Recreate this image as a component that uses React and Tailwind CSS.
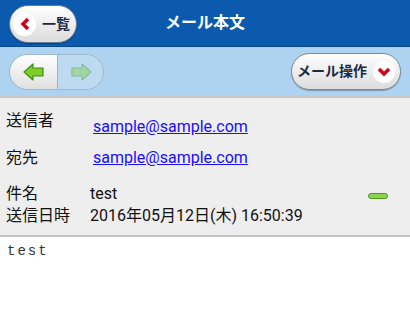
import React from "react";

const font = { fontFamily: 'Roboto, "Noto Sans CJK JP", sans-serif' };

const App = () => {
  return (
    <div className="w-[410px] h-[320px] bg-white overflow-hidden" style={font}>
      {/* header */}
      <div className="h-[47px] bg-[#0b5aae] border-b border-[#08488c] relative flex items-center justify-center">
        <button className="absolute left-[9px] top-[5px] h-[38px] w-[68px] rounded-full border border-[#6a7f96] bg-gradient-to-b from-white to-[#dcdcdc] flex items-center pl-[3px] gap-[6px] shadow-[0_1px_1px_rgba(0,0,0,0.3)]">
          <span className="w-[23px] h-[23px] rounded-full bg-white flex items-center justify-center">
            <svg width="12" height="14" viewBox="0 0 12 14">
              <path d="M9 2 L4 7 L9 12" stroke="#d0021b" strokeWidth="3.5" fill="none" strokeLinejoin="miter" />
            </svg>
          </span>
          <span className="text-[14px] font-bold text-[#1a2a44]">一覧</span>
        </button>
        <h1 className="text-white text-[16px] font-bold">メール本文</h1>
      </div>

      {/* toolbar */}
      <div className="h-[51px] bg-[#aed3f1] border-b-2 border-[#c8c8c8] flex items-center justify-between px-[9px]">
        <div className="flex h-[36px] w-[95px] rounded-full border border-[#9fb7cc] overflow-hidden">
          <div className="w-[48px] h-full bg-gradient-to-b from-white to-[#e0e0e0] border-r border-[#b0b0b0] flex items-center justify-center rounded-l-full">
            <svg width="22" height="18" viewBox="0 0 22 18">
              <path d="M1 9 L10 1 L10 5 L20 5 L20 13 L10 13 L10 17 Z" fill="#7ccd2c" stroke="#3f8e12" strokeWidth="1.2" strokeLinejoin="round" />
            </svg>
          </div>
          <div className="flex-1 h-full bg-[#bcdaf2] flex items-center justify-center">
            <svg width="22" height="18" viewBox="0 0 22 18" className="opacity-40">
              <path d="M21 9 L12 1 L12 5 L2 5 L2 13 L12 13 L12 17 Z" fill="#7ccd2c" stroke="#3f8e12" strokeWidth="1.2" strokeLinejoin="round" />
            </svg>
          </div>
        </div>
        <button className="h-[37px] w-[110px] rounded-full border border-[#7a8a9a] bg-gradient-to-b from-white to-[#dcdcdc] flex items-center justify-end pr-[5px] gap-[6px] shadow-[0_1px_1px_rgba(0,0,0,0.3)]">
          <span className="text-[14px] font-bold text-[#1a2a44]">メール操作</span>
          <span className="w-[22px] h-[22px] rounded-full bg-white flex items-center justify-center">
            <svg width="14" height="12" viewBox="0 0 14 12">
              <path d="M2 3 L7 8 L12 3" stroke="#d0021b" strokeWidth="3.5" fill="none" />
            </svg>
          </span>
        </button>
      </div>

      {/* headers */}
      <div className="h-[139px] bg-[#eeeeee] border-b-2 border-[#c4c4c4] pl-[6px] pr-[22px] text-[16px] text-[#111]">
        <div className="flex pt-[11px]">
          <span className="w-[87px]">送信者</span>
          <a className="mt-[6px] text-[#1a0dff] underline">sample@sample.com</a>
        </div>
        <div className="flex mt-[7px]">
          <span className="w-[87px]">宛先</span>
          <a className="text-[#1a0dff] underline">sample@sample.com</a>
        </div>
        <div className="flex items-center mt-[13px]">
          <div className="flex flex-col flex-1 leading-[22px]">
            <div className="flex">
              <span className="w-[84px]">件名</span>
              <span>test</span>
            </div>
            <div className="flex">
              <span className="w-[84px]">送信日時</span>
              <span>2016年05月12日(木) 16:50:39</span>
            </div>
          </div>
          <span className="w-[20px] h-[6px] rounded-full bg-[#8fd14f] border border-[#4a9a1e] mb-[18px]"></span>
        </div>
      </div>

      {/* body */}
      <div className="px-[7px] pt-[4px] text-[14px] text-[#333] tracking-[2px]" style={{ fontFamily: '"Liberation Mono", monospace' }}>
        test
      </div>
    </div>
  );
};

export default App;
